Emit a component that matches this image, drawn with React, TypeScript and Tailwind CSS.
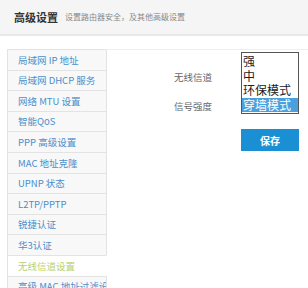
import React from "react";

const items = [
  "局域网 IP 地址",
  "局域网 DHCP 服务",
  "网络 MTU 设置",
  "智能QoS",
  "PPP 高级设置",
  "MAC 地址克隆",
  "UPNP 状态",
  "L2TP/PPTP",
  "锐捷认证",
  "华3认证",
  "无线信道设置",
  "高级 MAC 地址过滤设置",
];

const options = ["强", "中", "环保模式", "穿墙模式"];

export default function App() {
  return (
    <div
      className="w-[308px] h-[288px] overflow-hidden bg-white text-[#555]"
      style={{ fontFamily: '"Noto Sans CJK SC", "Noto Sans", sans-serif' }}
    >
      <div className="h-[36px] bg-[#f5f5f5] border-b-2 border-[#e8e8e8] flex items-center pl-[14px] gap-[7px]">
        <span className="text-[11px] font-semibold text-[#333] leading-none">高级设置</span>
        <span className="text-[8px] text-[#888] leading-none">设置路由器安全，及其他高级设置</span>
      </div>
      <div className="flex pl-[7px] pt-[13px]">
        <div className="w-[100px] shrink-0 border-l border-[#e3e3e3]">
          {items.map((t, i) => {
            const active = i === 10;
            return (
              <div
                key={t}
                className={
                  "h-[20.6px] flex items-center pl-[10px] whitespace-nowrap overflow-hidden text-[9.5px] border-t border-[#e3e3e3] " +
                  (active
                    ? "bg-white text-[#b9d070] border-r border-r-white"
                    : "bg-[#f8f8f8] text-[#4a8fcc] border-r border-r-[#e3e3e3]")
                }
              >
                {t}
              </div>
            );
          })}
        </div>
        <div className="flex-1 border-t border-[#eeeeee] -ml-px">
          <div className="flex pt-[2px]">
            <div className="w-[106px] flex flex-col items-end pt-[19px] gap-[17px] text-[9.5px] text-[#666]">
              <span className="leading-[12px]">无线信道</span>
              <span className="leading-[12px]">信号强度</span>
            </div>
            <div className="ml-[29px] flex flex-col">
              <div className="w-[58px] border border-[#555] bg-white py-[1px] text-[12px] leading-[14.5px] text-[#222]">
                {options.map((o, i) => (
                  <div
                    key={o}
                    className={
                      "h-[14.5px] pl-[1px] whitespace-nowrap " +
                      (i === 3 ? "bg-[#49a0dc] text-white" : "")
                    }
                  >
                    {o}
                  </div>
                ))}
              </div>
              <div className="mt-[15px] w-[58px] h-[22px] bg-[#1a8fd3] text-white text-[10px] font-bold flex items-center justify-center">
                保存
              </div>
            </div>
          </div>
        </div>
      </div>
    </div>
  );
}
